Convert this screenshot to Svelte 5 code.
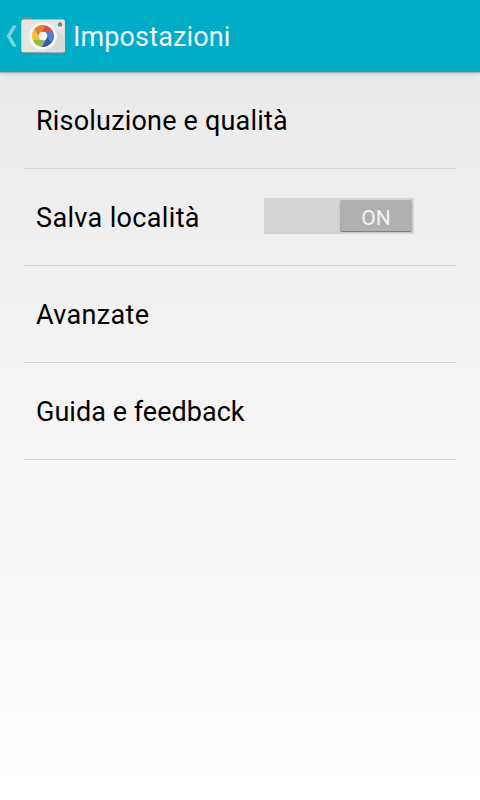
<script lang="ts">
	let settings = [
		{ label: 'Risoluzione e qualità', tracking: 0.19, toggle: false },
		{ label: 'Salva località', tracking: 0.35, toggle: true },
		{ label: 'Avanzate', tracking: 0.34, toggle: false },
		{ label: 'Guida e feedback', tracking: 0.03, toggle: false }
	];

	let saveLocation = true;

	// blades of the camera shutter, one every 60 degrees
	const blades = ['#e0503a', '#4f80cc', '#3a5dab', '#8fc044', '#f6bd34', '#ed7b30'];
</script>

<div class="screen">
	<header class="action-bar">
		<svg class="back" width="12" height="24" viewBox="0 0 12 24">
			<path d="M7 1.500h3.700L4.700 12l6 10.700H7L.600 12z" />
		</svg>
		<svg class="camera" width="46" height="42" viewBox="0 0 46 42">
			<path d="M4 5V2.800Q4 2 4.800 2h6.400Q12 2 12 2.800V5z" fill="#858b8f" />
			<rect x="1.300" y="5.500" width="43.600" height="32.500" rx="2" fill="#6d8f95" />
			<rect x="1.300" y="4.500" width="43.600" height="32.700" rx="2" fill="#e4e4e4" />
			<path d="M33 11.500L44.900 23v12.200q0 2-2 2H29L14 31z" fill="#dadada" />
			<circle cx="23" cy="21" r="13.800" fill="#f8f8f8" />
			<g transform="translate(23 21)">
				{#each blades as color, i}
					<path d="M1.660-10.870A11 11 0 0 1 10.250-4H-2.310z" fill={color} transform="rotate({i * 60})" />
				{/each}
				<circle r="4.200" fill="#fafafa" />
			</g>
			<circle cx="40" cy="9.500" r="2.200" fill="#7c7c7c" />
		</svg>
		<h1>Impostazioni</h1>
	</header>

	<ul class="settings">
		{#each settings as item}
			<li>
				<span class="label" style:letter-spacing="{item.tracking}px">{item.label}</span>
				{#if item.toggle}
					<button class="switch" class:off={!saveLocation} on:click={() => (saveLocation = !saveLocation)}>
						<span class="thumb">{saveLocation ? 'ON' : 'OFF'}</span>
					</button>
				{/if}
			</li>
		{/each}
	</ul>
</div>

<style>
	.screen {
		height: 800px;
		overflow: hidden;
		background: linear-gradient(#e8e8e8, #ffffff 97%);
		font-family: Roboto, sans-serif;
	}

	.action-bar {
		display: flex;
		align-items: center;
		box-sizing: border-box;
		height: 72px;
		padding-left: 6px;
		background: #00adc6;
		box-shadow: 0 1px 0 #b0acac, 0 1px 4px rgba(0, 0, 0, 0.25);
	}

	.back {
		fill: #7fd4e1;
	}

	.camera {
		margin-left: 2px;
	}

	h1 {
		margin: 0 0 0 7px;
		padding-top: 2px;
		color: #f3f3f3;
		font-size: 27px;
		font-weight: 400;
		line-height: 32px;
		letter-spacing: 0.13px;
	}

	.settings {
		margin: 0;
		padding: 0 24px;
		list-style: none;
	}

	li {
		display: flex;
		align-items: center;
		justify-content: space-between;
		height: 96px;
		padding: 0 42px 0 12px;
		border-bottom: 1px solid #d5d5d5;
	}

	.label {
		padding-top: 2px;
		color: #000;
		font-size: 27px;
		line-height: 32px;
	}

	.switch {
		display: flex;
		justify-content: flex-end;
		box-sizing: border-box;
		width: 150px;
		height: 36px;
		margin: 0 0 2px;
		padding: 2px;
		border: 0;
		background: #d4d4d4;
		font-family: inherit;
	}

	.switch.off {
		justify-content: flex-start;
	}

	.thumb {
		width: 72px;
		height: 31px;
		border-radius: 2px;
		background: #b0b0b0;
		box-shadow: 0 1px 1px #777;
		color: #f3f3f3;
		font-size: 21px;
		line-height: 36px;
		text-align: center;
	}
</style>
